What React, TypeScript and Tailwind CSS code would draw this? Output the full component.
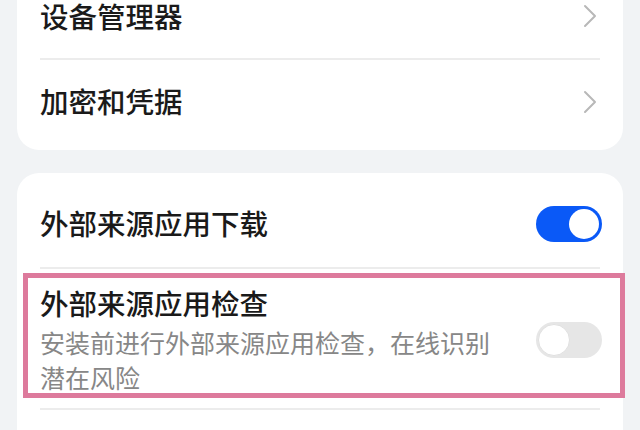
import React from 'react';

const font = { fontFamily: '"Noto Sans CJK SC", "Noto Sans", sans-serif' };

const Chevron = () => (
  <svg width="14" height="24" viewBox="0 0 14 24" fill="none">
    <polyline points="2,2 12,12 2,22" stroke="#b8b8b8" strokeWidth="2" strokeLinecap="round" strokeLinejoin="round" />
  </svg>
);

const Toggle = ({ on }: { on: boolean }) =>
  on ? (
    <div className="w-[66px] h-[36px] rounded-full bg-[#0a59f7] p-[3px] flex justify-end">
      <div className="w-[30px] h-[30px] rounded-full bg-white" />
    </div>
  ) : (
    <div className="w-[66px] h-[36px] rounded-full bg-[#e6e6e6] p-[2px] flex justify-start">
      <div className="w-[32px] h-[32px] rounded-full bg-white border border-[#e0e0e0]" />
    </div>
  );

const Divider = () => <div className="mx-[23px] h-[2px] bg-[#ececec]" />;

export default function App() {
  return (
    <div className="w-[640px] h-[430px] overflow-hidden bg-[#f1f3f5]" style={font}>
      {/* top card */}
      <div className="mx-[17px] mt-[-33px] rounded-[22px] bg-white pt-[7px] pb-[7px]">
        <div className="h-[84px] flex items-center justify-between pl-[23px] pr-[26px]">
          <span className="text-[28.5px] font-medium text-[#1a1a1a] leading-none">设备管理器</span>
          <Chevron />
        </div>
        <Divider />
        <div className="h-[83px] flex items-center justify-between pl-[23px] pr-[26px]">
          <span className="text-[28.5px] font-medium text-[#1a1a1a] leading-none">加密和凭据</span>
          <Chevron />
        </div>
      </div>

      {/* source apps card */}
      <div className="relative mx-[17px] mt-[23px] rounded-[22px] bg-white pt-[7px] pb-[40px]">
        <div className="h-[87px] flex items-center justify-between pl-[23px] pr-[21px]">
          <span className="text-[28.5px] font-medium text-[#1a1a1a] leading-none">外部来源应用下载</span>
          <Toggle on />
        </div>
        <Divider />
        <div className="flex items-center justify-between pl-[23px] pr-[21px] pt-[16px] pb-[13px]">
          <div>
            <div className="text-[28.5px] font-medium text-[#1a1a1a] leading-[36px]">外部来源应用检查</div>
            <div className="mt-[4px] w-[460px] text-[25px] text-[#878787] leading-[35px]">
              安装前进行外部来源应用检查，在线识别潜在风险
            </div>
          </div>
          <Toggle on={false} />
        </div>
        <Divider />

        {/* highlight annotation */}
        <div className="absolute left-[6px] top-[100px] w-[602px] h-[125px] border-[5px] border-[#dd7a9c] pointer-events-none" />
      </div>
    </div>
  );
}
